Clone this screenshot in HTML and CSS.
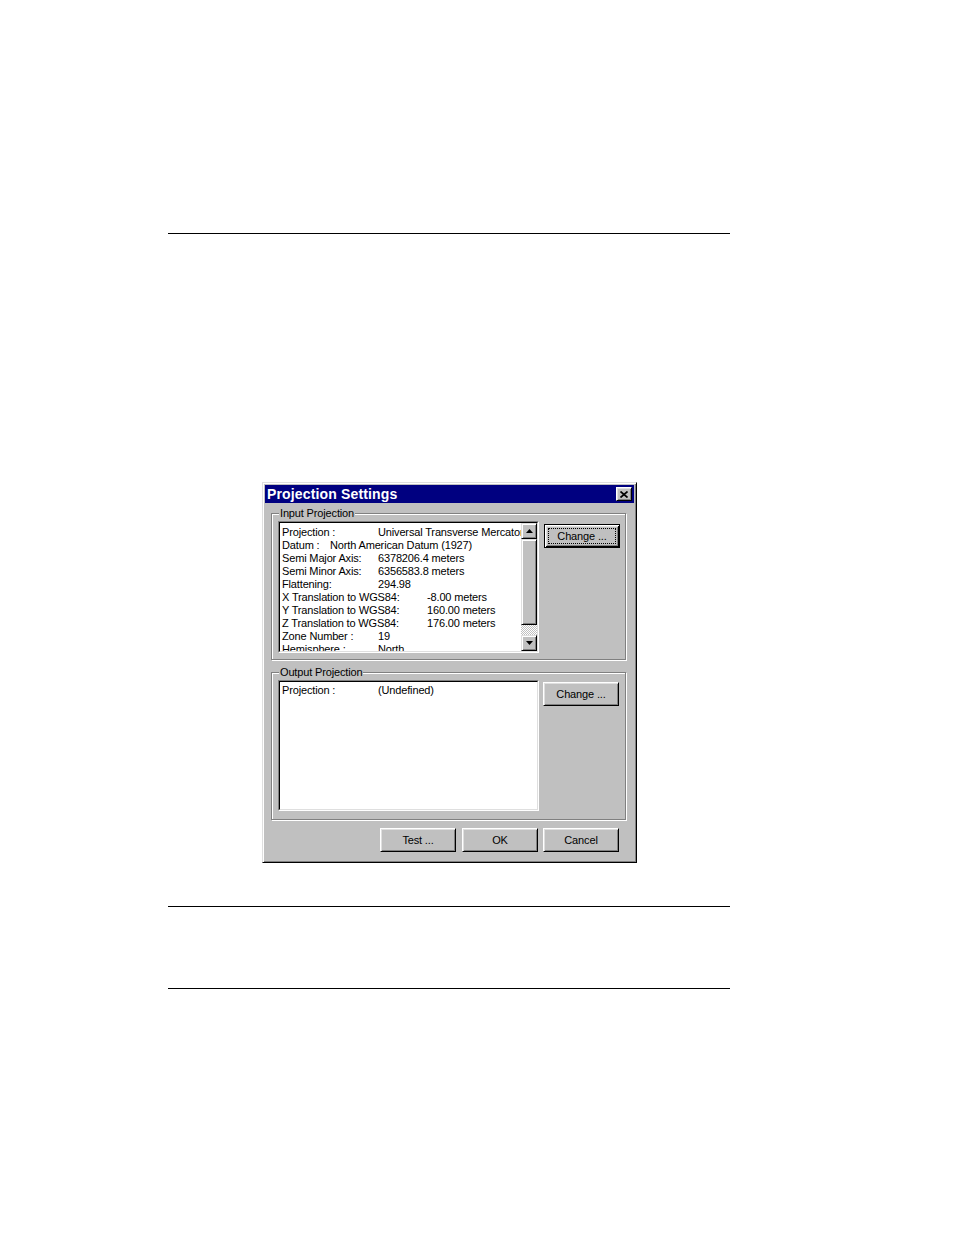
FILE: index.html
```html
<!DOCTYPE html>
<html>
<head>
<meta charset="utf-8">
<title>Projection Settings</title>
<link rel="stylesheet" href="styles.css">
</head>
<body>
<div class="rule rule-top"></div>

<div class="dialog">
  <div class="titlebar">
    <span class="title">Projection Settings</span>
    <button class="close" aria-label="Close">
      <svg width="8" height="7" viewBox="0 0 8 7"><path d="M0.5 0.5 L7.5 6.5 M7.5 0.5 L0.5 6.5" stroke="#000" stroke-width="1.7" fill="none"/></svg>
    </button>
  </div>

  <div class="dlg-body">
    <div class="group group-input">
      <span class="group-label">Input Projection</span>
      <div class="listbox lb-in">
        <div class="lb-inner">
          <div class="lb-text lb-text-in">
            <div class="row"><span class="k k96">Projection :</span>Universal Transverse Mercator</div>
            <div class="row"><span class="k k48">Datum :</span>North American Datum (1927)</div>
            <div class="row"><span class="k k96">Semi Major Axis:</span>6378206.4 meters</div>
            <div class="row"><span class="k k96">Semi Minor Axis:</span>6356583.8 meters</div>
            <div class="row"><span class="k k96">Flattening:</span>294.98</div>
            <div class="row"><span class="k k145">X Translation to WGS84:</span>-8.00 meters</div>
            <div class="row"><span class="k k145">Y Translation to WGS84:</span>160.00 meters</div>
            <div class="row"><span class="k k145">Z Translation to WGS84:</span>176.00 meters</div>
            <div class="row"><span class="k k96">Zone Number :</span>19</div>
            <div class="row"><span class="k k96">Hemisphere :</span>North</div>
          </div>
          <div class="scrollbar">
            <div class="sb-btn raised">
              <svg width="7" height="4" viewBox="0 0 7 4"><path d="M3.5 0 L7 4 L0 4 Z" fill="#000"/></svg>
            </div>
            <div class="sb-thumb raised"></div>
            <div class="sb-track"></div>
            <div class="sb-btn raised">
              <svg width="7" height="4" viewBox="0 0 7 4"><path d="M0 0 L7 0 L3.5 4 Z" fill="#000"/></svg>
            </div>
          </div>
        </div>
      </div>
      <button class="btn btn-default btn-change-in"><span class="focus">Change ...</span></button>
    </div>

    <div class="group group-output">
      <span class="group-label">Output Projection</span>
      <div class="listbox lb-out">
        <div class="lb-inner">
          <div class="lb-text">
            <div class="row"><span class="k k96">Projection :</span>(Undefined)</div>
          </div>
        </div>
      </div>
      <button class="btn btn-change-out">Change ...</button>
    </div>

    <div class="actions">
      <button class="btn btn-test">Test ...</button>
      <button class="btn">OK</button>
      <button class="btn">Cancel</button>
    </div>
  </div>
</div>

<div class="rule rule-mid"></div>
<div class="rule rule-bot"></div>
</body>
</html>
```

FILE: styles.css
```css
html, body {
  margin: 0;
  padding: 0;
  background: #fff;
}

body {
  font-family: "Liberation Sans", Arial, sans-serif;
  color: #000;
  overflow: hidden;
}

.rule {
  margin-left: 168px;
  width: 562px;
  height: 1px;
  background: #000;
}

.rule-top { margin-top: 233px; }
.rule-mid { margin-top: 43px; }
.rule-bot { margin-top: 81px; }

.dialog {
  margin: 248px 0 0 262px;
  width: 375px;
  height: 381px;
  box-sizing: border-box;
  background: #c0c0c0;
  border: 1px solid;
  border-color: #dfdfdf #000 #000 #dfdfdf;
  box-shadow: inset 1px 1px #fff, inset -1px -1px #808080;
  padding: 2px;
}

.titlebar {
  height: 18px;
  background: #000080;
  display: flex;
  align-items: center;
  justify-content: space-between;
  padding: 0 2px 0 2px;
}

.title {
  color: #fff;
  font-weight: bold;
  font-size: 14px;
  line-height: 18px;
  letter-spacing: 0.15px;
  white-space: nowrap;
}

.close {
  width: 16px;
  height: 14px;
  padding: 0;
  margin: 0;
  box-sizing: border-box;
  background: #c0c0c0;
  border: 1px solid;
  border-color: #fff #000 #000 #fff;
  box-shadow: inset 1px 1px #dfdfdf, inset -1px -1px #808080;
  display: flex;
  align-items: center;
  justify-content: center;
}

.close svg { display: block; margin-left: -1px; }

.dlg-body {
  padding: 10px 8px 0 6px;
}

.group {
  position: relative;
  display: flex;
  align-items: flex-start;
  border: 1px solid #808080;
  box-shadow: inset 1px 1px #fff, 1px 1px #fff;
}

.group-input {
  padding: 7px 5px 6px 6px;
  gap: 5px;
}

.group-output {
  margin-top: 12px;
  padding: 7px 6px 8px 6px;
  gap: 4px;
}

.group-label {
  position: absolute;
  top: -7px;
  left: 7px;
  padding: 0 1px;
  background: #c0c0c0;
  font-size: 11px;
  line-height: 13px;
  letter-spacing: -0.15px;
  white-space: nowrap;
}

.listbox {
  width: 261px;
  box-sizing: border-box;
  border: 1px solid;
  border-color: #808080 #fff #fff #808080;
  flex: none;
}

.lb-in { height: 132px; }
.lb-out { height: 131px; }

.lb-inner {
  height: 100%;
  box-sizing: border-box;
  border: 1px solid;
  border-color: #000 #dfdfdf #dfdfdf #000;
  background: #fff;
  display: flex;
}

.lb-text {
  flex: 1;
  min-width: 0;
  overflow: hidden;
  padding: 2px 0 0 2px;
  white-space: nowrap;
  font-size: 11px;
  line-height: 13px;
  letter-spacing: -0.15px;
}

.lb-text-in { padding-top: 3px; }

.row { height: 13px; }

.k { display: inline-block; }
.k48 { width: 48px; }
.k96 { width: 96px; }
.k145 { width: 145px; }

.scrollbar {
  width: 16px;
  flex: none;
  display: flex;
  flex-direction: column;
}

.raised {
  background: #c0c0c0;
  box-sizing: border-box;
  border: 1px solid;
  border-color: #dfdfdf #000 #000 #dfdfdf;
  box-shadow: inset 1px 1px #fff, inset -1px -1px #808080;
}

.sb-btn {
  height: 16px;
  flex: none;
  display: flex;
  align-items: center;
  justify-content: center;
}

.sb-btn svg { display: block; }

.sb-thumb {
  height: 86px;
  flex: none;
}

.sb-track {
  flex: 1;
  background: repeating-conic-gradient(#fff 0 25%, #c0c0c0 0 50%) 0 0 / 2px 2px;
}

.btn {
  width: 76px;
  height: 24px;
  flex: none;
  padding: 0;
  margin: 0;
  box-sizing: border-box;
  font-family: "Liberation Sans", Arial, sans-serif;
  font-size: 11px;
  letter-spacing: -0.15px;
  color: #000;
  background: #c0c0c0;
  border: 1px solid;
  border-color: #fff #000 #000 #fff;
  box-shadow: inset 1px 1px #dfdfdf, inset -1px -1px #808080;
}

.btn-default {
  border-color: #000;
  box-shadow: inset 1px 1px #fff, inset -1px -1px #000, inset 2px 2px #dfdfdf, inset -2px -2px #808080;
  padding: 3px;
  display: flex;
}

.focus {
  flex: 1;
  border: 1px dotted #000;
  display: flex;
  align-items: center;
  justify-content: center;
}

.btn-change-in { margin-top: 3px; }
.btn-change-out { margin-top: 2px; }

.actions {
  margin-top: 8px;
  margin-right: 7px;
  display: flex;
  justify-content: flex-end;
  gap: 5px;
}

.btn-test { margin-right: 1px; }
```
